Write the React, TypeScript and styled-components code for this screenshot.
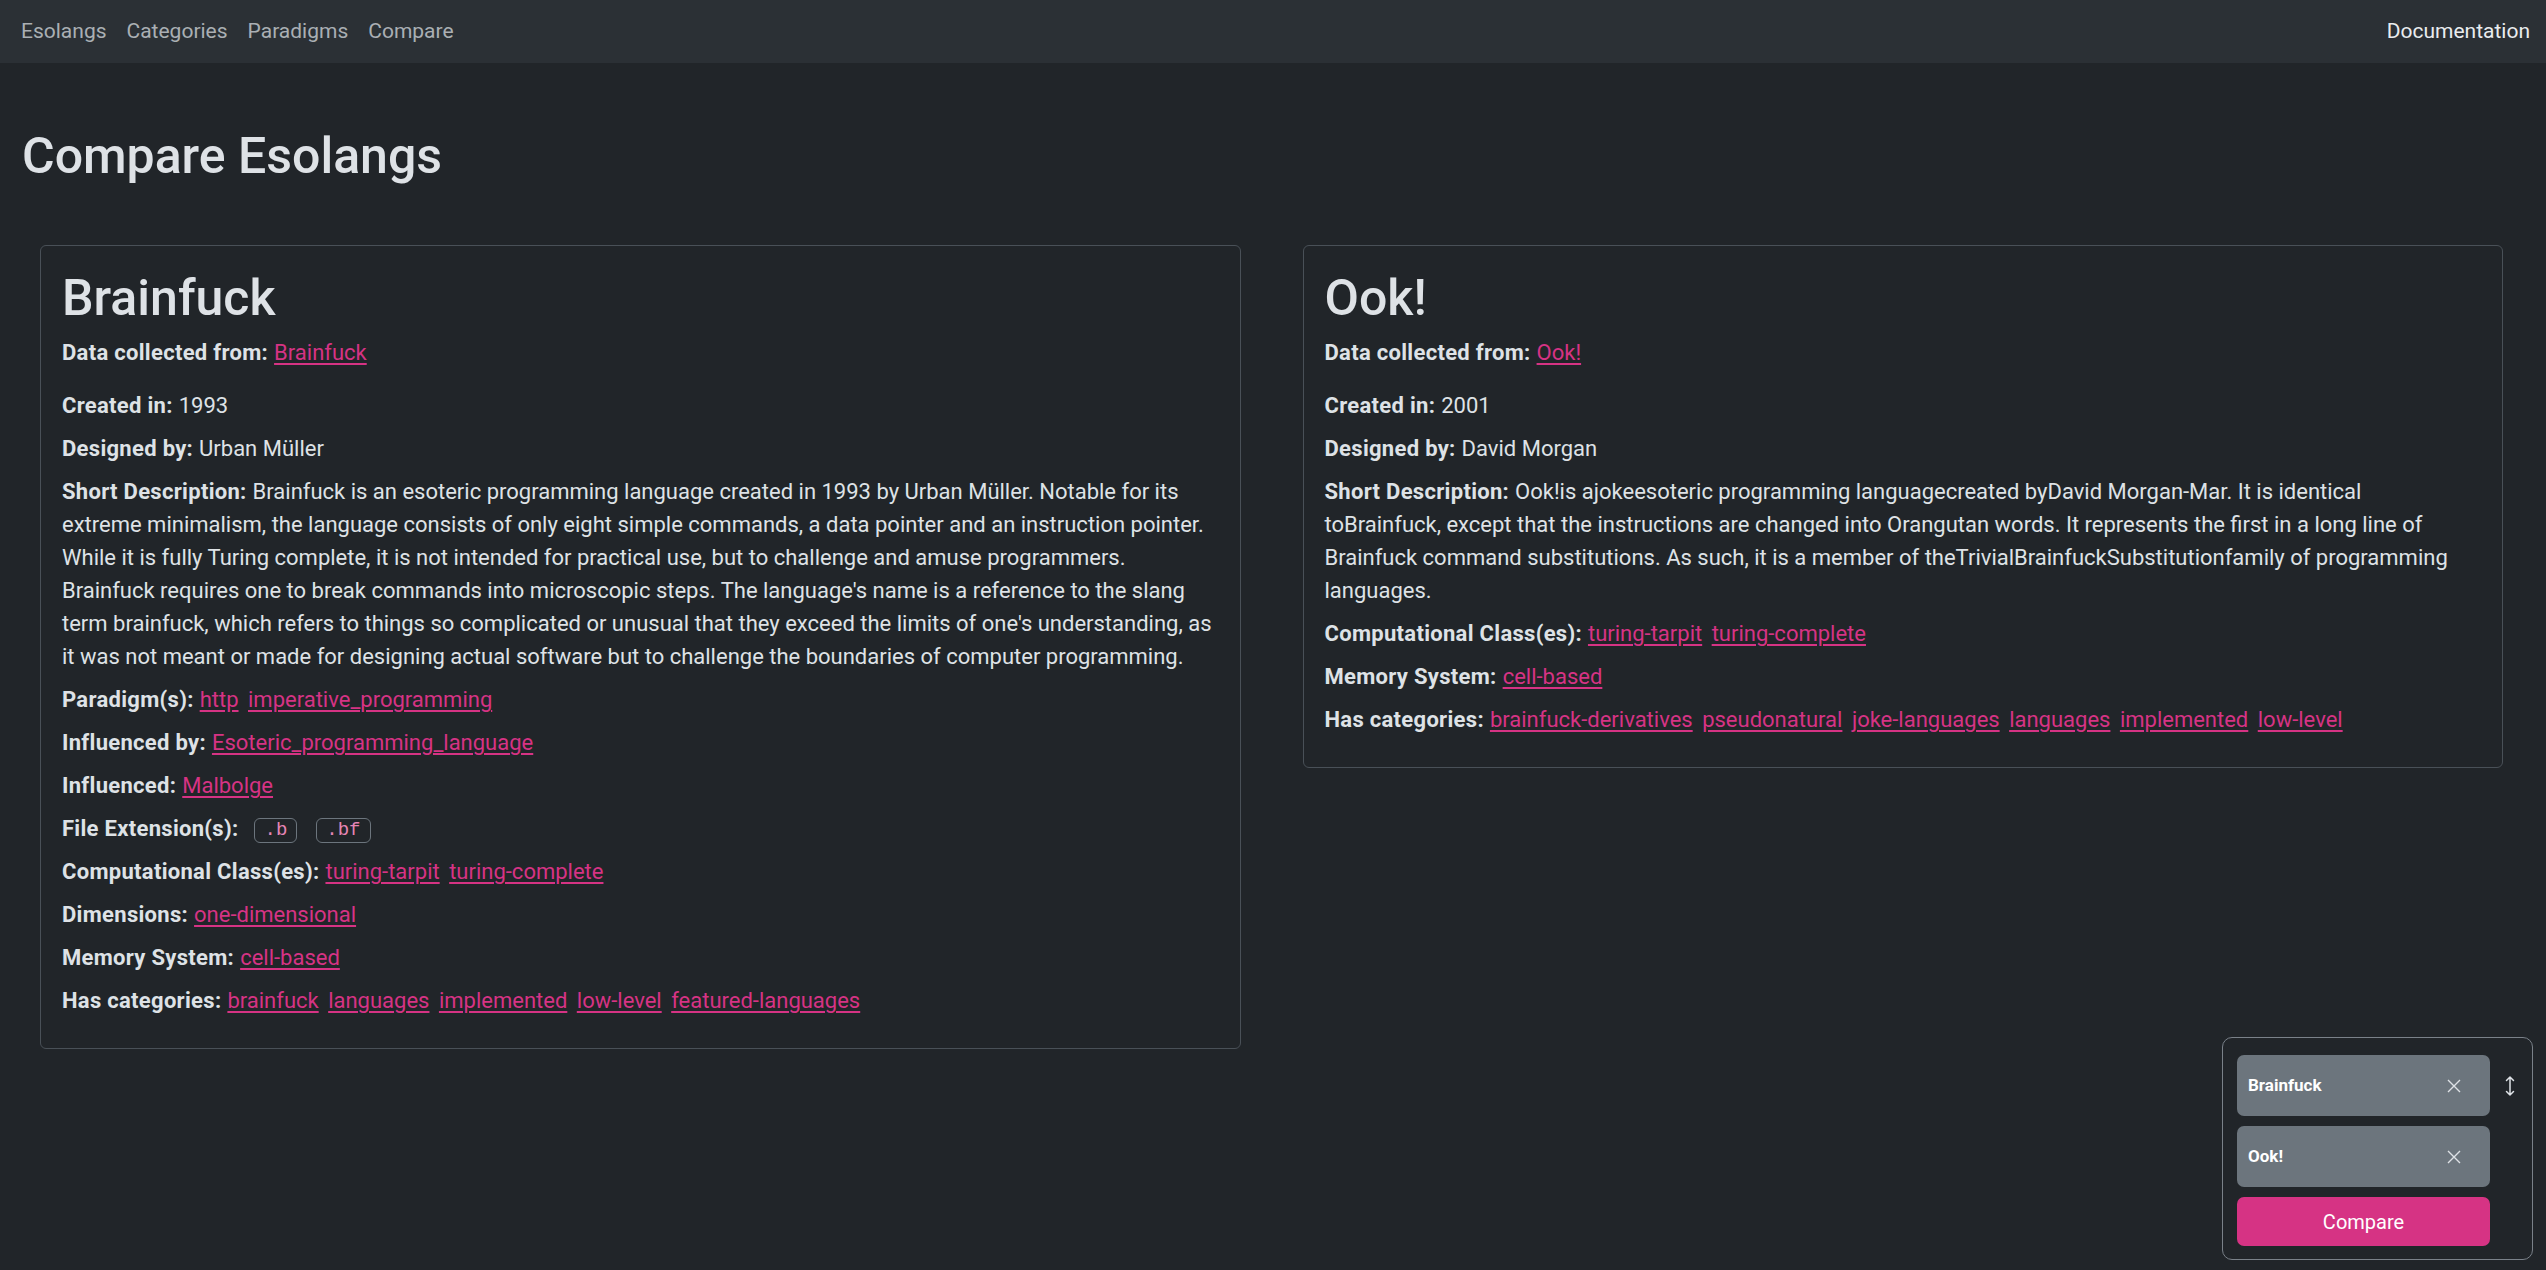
import React from "react";
import styled, { createGlobalStyle } from "styled-components";

const FONT = `Roboto, "Noto Sans", "Liberation Sans", sans-serif`;

const Global = createGlobalStyle`
  html, body {
    margin: 0;
    padding: 0;
    background: #212529;
    color: #dee2e6;
    font-family: ${FONT};
    font-size: 22px;
    line-height: 1.5;
  }
  * { box-sizing: border-box; }
`;

const Nav = styled.nav`
  height: 63px;
  background: #2b3035;
  display: flex;
  align-items: center;
  justify-content: space-between;
  padding: 0 6px 0 11px;
`;

const NavGroup = styled.div`
  display: flex;
  align-items: center;
`;

const NavLink = styled.a<{ $bright?: boolean }>`
  color: ${(p) => (p.$bright ? "#e9ecef" : "rgba(222, 226, 230, 0.72)")};
  text-decoration: none;
  padding: 0 10px;
  font-size: 21px;
  line-height: 33px;
`;

const Main = styled.main`
  padding: 62px 43px 0 22px;
`;

const PageTitle = styled.h1`
  margin: 0 0 57px 0;
  font-size: 50px;
  font-weight: 500;
  line-height: 1.25;
  color: #dee2e6;
`;

const Grid = styled.div`
  display: grid;
  grid-template-columns: 1fr 1fr;
  column-gap: 62px;
  align-items: start;
  padding-left: 18px;
`;

const Card = styled.section`
  border: 1.5px solid #495057;
  border-radius: 6px;
  padding: 21px;
`;

const CardTitle = styled.h2`
  margin: 0 0 7px 0;
  font-size: 50px;
  font-weight: 500;
  line-height: 1.25;
  color: #dee2e6;
`;

const Row = styled.div<{ $gap?: number }>`
  margin-bottom: ${(p) => p.$gap ?? 10}px;
  line-height: 33px;
`;

const Label = styled.strong`
  font-weight: 700;
  letter-spacing: 0.3px;
  margin-right: 6px;
`;

const Link = styled.a`
  color: #d63384;
  text-decoration: underline;
  text-underline-offset: 3px;
  margin-right: 4px;
`;

const Code = styled.code`
  display: inline-block;
  font-family: "Liberation Mono", "DejaVu Sans Mono", monospace;
  font-size: 19px;
  line-height: 21px;
  color: #e685b5;
  border: 1.5px solid #6c757d;
  border-radius: 6px;
  padding: 1px 9px;
  margin-left: 10px;
  margin-right: 9px;
  vertical-align: 1px;
`;

const Dock = styled.aside`
  position: fixed;
  right: 13px;
  bottom: 10px;
  width: 311px;
  border: 1.5px solid #7a8189;
  border-radius: 10px;
  padding: 17px 0 13px 14px;
  display: grid;
  grid-template-columns: 253px 44px;
  row-gap: 10px;
  background: #212529;
`;

const Pill = styled.div`
  height: 61px;
  background: #6c757d;
  border-radius: 7px;
  display: flex;
  align-items: center;
  justify-content: space-between;
  padding: 0 28px 0 11px;
  color: #fff;
  font-weight: 700;
  font-size: 17px;
`;

const CloseBtn = styled.button`
  background: none;
  border: none;
  padding: 0;
  width: 16px;
  height: 16px;
  display: flex;
  color: #dee2e6;
  cursor: pointer;
`;

const SwapCell = styled.div`
  display: flex;
  align-items: center;
  justify-content: center;
  padding-right: 4px;
`;

const CompareBtn = styled.button`
  height: 49px;
  border: none;
  border-radius: 7px;
  background: #d63384;
  color: #fff;
  font-family: ${FONT};
  font-size: 20px;
  cursor: pointer;
`;

type Field =
  | { label: string; text: string; gap?: number }
  | { label: string; links: string[]; gap?: number }
  | { label: string; codes: string[]; gap?: number };

type Lang = { name: string; fields: Field[] };

const bfDesc =
  "Brainfuck is an esoteric programming language created in 1993 by Urban Müller. Notable for its extreme minimalism, the language consists of only eight simple commands, a data pointer and an instruction pointer. While it is fully Turing complete, it is not intended for practical use, but to challenge and amuse programmers. Brainfuck requires one to break commands into microscopic steps. The language's name is a reference to the slang term brainfuck, which refers to things so complicated or unusual that they exceed the limits of one's understanding, as it was not meant or made for designing actual software but to challenge the boundaries of computer programming.";

const ookDesc =
  "Ook!is ajokeesoteric programming languagecreated byDavid Morgan-Mar. It is identical toBrainfuck, except that the instructions are changed into Orangutan words. It represents the first in a long line of Brainfuck command substitutions. As such, it is a member of theTrivialBrainfuckSubstitutionfamily of programming languages.";

const langs: Lang[] = [
  {
    name: "Brainfuck",
    fields: [
      { label: "Data collected from:", links: ["Brainfuck"], gap: 20 },
      { label: "Created in:", text: "1993" },
      { label: "Designed by:", text: "Urban Müller" },
      { label: "Short Description:", text: bfDesc },
      { label: "Paradigm(s):", links: ["http", "imperative_programming"] },
      { label: "Influenced by:", links: ["Esoteric_programming_language"] },
      { label: "Influenced:", links: ["Malbolge"] },
      { label: "File Extension(s):", codes: [".b", ".bf"] },
      { label: "Computational Class(es):", links: ["turing-tarpit", "turing-complete"] },
      { label: "Dimensions:", links: ["one-dimensional"] },
      { label: "Memory System:", links: ["cell-based"] },
      {
        label: "Has categories:",
        links: ["brainfuck", "languages", "implemented", "low-level", "featured-languages"],
      },
    ],
  },
  {
    name: "Ook!",
    fields: [
      { label: "Data collected from:", links: ["Ook!"], gap: 20 },
      { label: "Created in:", text: "2001" },
      { label: "Designed by:", text: "David Morgan" },
      { label: "Short Description:", text: ookDesc },
      { label: "Computational Class(es):", links: ["turing-tarpit", "turing-complete"] },
      { label: "Memory System:", links: ["cell-based"] },
      {
        label: "Has categories:",
        links: [
          "brainfuck-derivatives",
          "pseudonatural",
          "joke-languages",
          "languages",
          "implemented",
          "low-level",
        ],
      },
    ],
  },
];

const XIcon = () => (
  <svg width="16" height="16" viewBox="0 0 16 16" fill="none" stroke="currentColor" strokeWidth="1.4">
    <path d="M2 2 L14 14 M14 2 L2 14" />
  </svg>
);

const SwapIcon = () => (
  <svg width="10" height="22" viewBox="0 0 10 22" fill="none" stroke="#dee2e6" strokeWidth="1.5" strokeLinecap="round" strokeLinejoin="round">
    <path d="M5 2 V20 M1.5 5.5 L5 2 L8.5 5.5 M1.5 16.5 L5 20 L8.5 16.5" />
  </svg>
);

function FieldRow({ f }: { f: Field }) {
  return (
    <Row $gap={f.gap}>
      <Label>{f.label}</Label>
      {"text" in f && f.text}
      {"links" in f &&
        f.links.map((l) => (
          <React.Fragment key={l}>
            <Link href="#">{l}</Link>{" "}
          </React.Fragment>
        ))}
      {"codes" in f && f.codes.map((c) => <Code key={c}>{c}</Code>)}
    </Row>
  );
}

export default function App() {
  return (
    <>
      <Global />
      <Nav>
        <NavGroup>
          <NavLink href="#">Esolangs</NavLink>
          <NavLink href="#">Categories</NavLink>
          <NavLink href="#">Paradigms</NavLink>
          <NavLink href="#">Compare</NavLink>
        </NavGroup>
        <NavLink href="#" $bright>
          Documentation
        </NavLink>
      </Nav>
      <Main>
        <PageTitle>Compare Esolangs</PageTitle>
        <Grid>
          {langs.map((lang) => (
            <Card key={lang.name}>
              <CardTitle>{lang.name}</CardTitle>
              {lang.fields.map((f) => (
                <FieldRow key={f.label} f={f} />
              ))}
            </Card>
          ))}
        </Grid>
      </Main>
      <Dock>
        <Pill>
          <span>Brainfuck</span>
          <CloseBtn aria-label="remove">
            <XIcon />
          </CloseBtn>
        </Pill>
        <SwapCell>
          <SwapIcon />
        </SwapCell>
        <Pill>
          <span>Ook!</span>
          <CloseBtn aria-label="remove">
            <XIcon />
          </CloseBtn>
        </Pill>
        <div />
        <CompareBtn>Compare</CompareBtn>
        <div />
      </Dock>
    </>
  );
}
